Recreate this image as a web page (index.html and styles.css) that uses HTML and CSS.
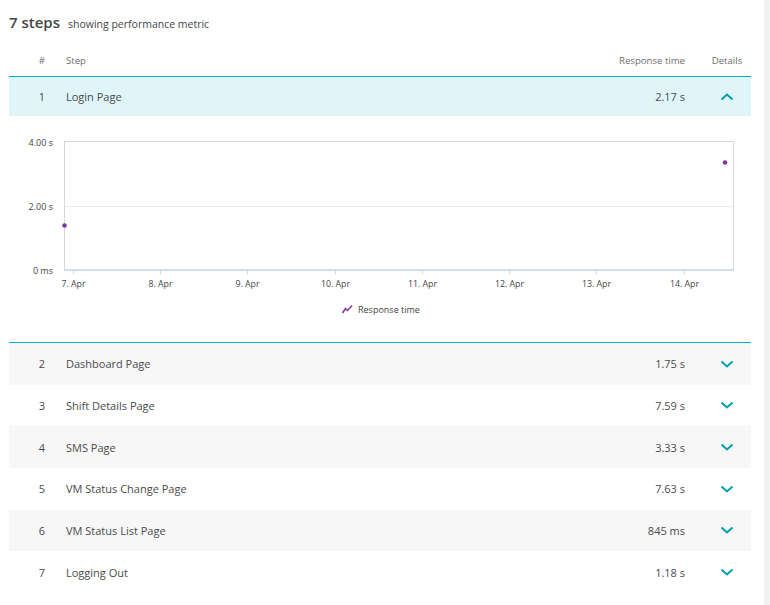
FILE: index.html
```html
<!DOCTYPE html>
<html>
<head>
<meta charset="utf-8">
<link rel="stylesheet" href="styles.css">
</head>
<body>
<div class="page">
  <main class="main">
    <h1 class="title"><span class="count">7 steps</span><span class="sub">showing performance metric</span></h1>
    <div class="table">
      <div class="row head">
        <span class="num">#</span><span class="name">Step</span><span class="val">Response time</span><span class="det">Details</span>
      </div>
      <div class="row open">
        <span class="num">1</span><span class="name">Login Page</span><span class="val">2.17 s</span>
        <span class="det"><svg class="chev" width="14" height="8" viewBox="0 0 14 8"><path d="M1.5 6.5 L7 1.5 L12.5 6.5"/></svg></span>
      </div>
      <div class="chart">
        <svg width="742" height="225" viewBox="0 0 742 225">
          <line class="gridline" x1="55" y1="90.5" x2="724" y2="90.5"/>
          <rect class="frame" x="55.5" y="25.5" width="669" height="128.5"/>
          <line class="axis" x1="55" y1="154" x2="724.5" y2="154"/>
          <g class="ticks">
            <line x1="64.5" y1="154" x2="64.5" y2="158"/>
            <line x1="151.5" y1="154" x2="151.5" y2="158"/>
            <line x1="238.5" y1="154" x2="238.5" y2="158"/>
            <line x1="326.5" y1="154" x2="326.5" y2="158"/>
            <line x1="413.5" y1="154" x2="413.5" y2="158"/>
            <line x1="500.5" y1="154" x2="500.5" y2="158"/>
            <line x1="587.5" y1="154" x2="587.5" y2="158"/>
            <line x1="675.5" y1="154" x2="675.5" y2="158"/>
          </g>
          <g class="ylab">
            <text x="44" y="29.5">4.00 s</text>
            <text x="44" y="93.5">2.00 s</text>
            <text x="44" y="157.5">0 ms</text>
          </g>
          <g class="xlab">
            <text x="64.5" y="170.5">7. Apr</text>
            <text x="151.5" y="170.5">8. Apr</text>
            <text x="238.5" y="170.5">9. Apr</text>
            <text x="326.5" y="170.5">10. Apr</text>
            <text x="413.5" y="170.5">11. Apr</text>
            <text x="500.5" y="170.5">12. Apr</text>
            <text x="587.5" y="170.5">13. Apr</text>
            <text x="675.5" y="170.5">14. Apr</text>
          </g>
          <circle class="dot" cx="55.5" cy="109.5" r="2.3"/>
          <circle class="dot" cx="716" cy="46.5" r="2.3"/>
          <path class="legicon" d="M333.5 197 L336.5 192.5 L338.5 194.5 L343 189.5"/>
          <text class="legend" x="349" y="196.5">Response time</text>
        </svg>
      </div>
      <div class="row first">
        <span class="num">2</span><span class="name">Dashboard Page</span><span class="val">1.75 s</span>
        <span class="det"><svg class="chev" width="14" height="8" viewBox="0 0 14 8"><path d="M1.5 1.5 L7 6.5 L12.5 1.5"/></svg></span>
      </div>
      <div class="row">
        <span class="num">3</span><span class="name">Shift Details Page</span><span class="val">7.59 s</span>
        <span class="det"><svg class="chev" width="14" height="8" viewBox="0 0 14 8"><path d="M1.5 1.5 L7 6.5 L12.5 1.5"/></svg></span>
      </div>
      <div class="row">
        <span class="num">4</span><span class="name">SMS Page</span><span class="val">3.33 s</span>
        <span class="det"><svg class="chev" width="14" height="8" viewBox="0 0 14 8"><path d="M1.5 1.5 L7 6.5 L12.5 1.5"/></svg></span>
      </div>
      <div class="row">
        <span class="num">5</span><span class="name">VM Status Change Page</span><span class="val">7.63 s</span>
        <span class="det"><svg class="chev" width="14" height="8" viewBox="0 0 14 8"><path d="M1.5 1.5 L7 6.5 L12.5 1.5"/></svg></span>
      </div>
      <div class="row">
        <span class="num">6</span><span class="name">VM Status List Page</span><span class="val">845 ms</span>
        <span class="det"><svg class="chev" width="14" height="8" viewBox="0 0 14 8"><path d="M1.5 1.5 L7 6.5 L12.5 1.5"/></svg></span>
      </div>
      <div class="row">
        <span class="num">7</span><span class="name">Logging Out</span><span class="val">1.18 s</span>
        <span class="det"><svg class="chev" width="14" height="8" viewBox="0 0 14 8"><path d="M1.5 1.5 L7 6.5 L12.5 1.5"/></svg></span>
      </div>
    </div>
  </main>
  <div class="scroll"></div>
</div>
</body>
</html>
```

FILE: styles.css
```css
html, body {
  margin: 0;
  padding: 0;
  background: #fff;
}
body {
  font-family: "Open Sans", "Noto Sans", sans-serif;
  color: #4a4b4b;
  width: 770px;
  height: 605px;
  overflow: hidden;
}
.page {
  display: flex;
  height: 605px;
}
.main {
  width: 742px;
  padding: 12px 13px 0 9px;
}
.scroll {
  width: 6px;
  background: #f1f1f1;
}
.title {
  margin: 0;
  height: 20px;
  display: flex;
  align-items: baseline;
  line-height: 20px;
  font-weight: normal;
}
.count {
  font-size: 15px;
  font-weight: 600;
  color: #454646;
}
.sub {
  font-size: 10.5px;
  margin-left: 8px;
  color: #454646;
}
.table {
  margin-top: 12px;
}
.row {
  display: grid;
  grid-template-columns: 57px 1fr auto 48px;
  align-items: center;
  height: 41.67px;
  font-size: 11px;
  background: #fff;
}
.row:nth-child(even) {
  background: #f7f7f7;
}
.row.head {
  height: 32px;
  font-size: 9.6px;
  color: #6e6e6e;
  background: #fff;
  border-bottom: 1px solid #00b4c8;
}
.row.open {
  height: 39px;
  background: #dff5f8;
}
.row.first {
  border-top: 1px solid #00b4c8;
}
.num {
  text-align: right;
  padding-right: 21px;
}
.val {
  text-align: right;
  padding-right: 18px;
}
.det {
  display: flex;
  justify-content: center;
  align-items: center;
}
.chev {
  display: block;
}
.chev path {
  fill: none;
  stroke: #009fb0;
  stroke-width: 2;
}
.chart {
  height: 226px;
}
.chart svg {
  display: block;
}
.gridline {
  stroke: #e9e9ee;
  stroke-width: 1;
}
.frame {
  fill: none;
  stroke: #d6d6dc;
  stroke-width: 1;
}
.axis {
  stroke: #ccd6eb;
  stroke-width: 1.5;
}
.ticks line {
  stroke: #ccd6eb;
  stroke-width: 1;
}
.ylab text {
  font-family: "Open Sans", sans-serif;
  font-size: 9px;
  fill: #454646;
  text-anchor: end;
}
.xlab text {
  font-family: "Open Sans", sans-serif;
  font-size: 8.8px;
  fill: #454646;
  text-anchor: middle;
}
.dot {
  fill: #7c38a1;
}
.legicon {
  fill: none;
  stroke: #7c38a1;
  stroke-width: 1.5;
}
.legend {
  font-family: "Open Sans", sans-serif;
  font-size: 9px;
  fill: #454646;
}
```
